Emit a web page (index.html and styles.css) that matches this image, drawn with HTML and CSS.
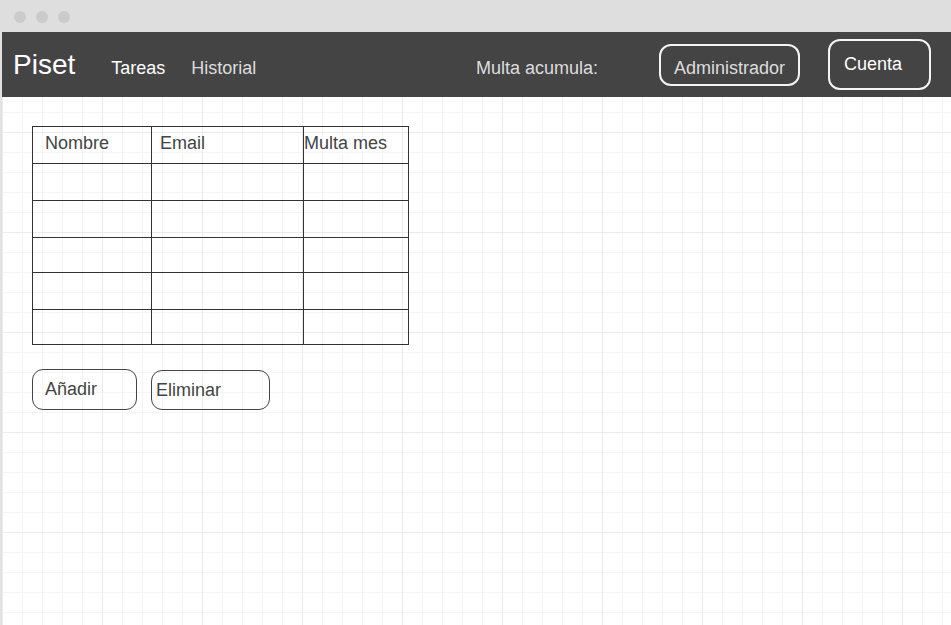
FILE: index.html
```html
<!DOCTYPE html>
<html lang="es">
<head>
<meta charset="utf-8">
<title>Piset</title>
<link rel="stylesheet" href="styles.css">
</head>
<body>
<div class="window">
  <div class="titlebar">
    <span class="dot"></span><span class="dot"></span><span class="dot"></span>
  </div>
  <div class="canvas">
    <header class="navbar">
      <span class="brand">Piset</span>
      <a class="nav-link nav-tareas">Tareas</a>
      <a class="nav-link nav-historial">Historial</a>
      <span class="multa">Multa acumula:</span>
      <button class="nav-btn btn-admin">Administrador</button>
      <button class="nav-btn btn-cuenta">Cuenta</button>
    </header>
    <main class="content">
      <table class="users">
        <colgroup>
          <col class="col-name"><col class="col-email"><col class="col-multa">
        </colgroup>
        <thead>
          <tr class="row-head">
            <th class="th-name">Nombre</th>
            <th class="th-email">Email</th>
            <th class="th-multa">Multa mes</th>
          </tr>
        </thead>
        <tbody>
          <tr class="row-tall"><td></td><td></td><td></td></tr>
          <tr class="row-tall"><td></td><td></td><td></td></tr>
          <tr class="row-short"><td></td><td></td><td></td></tr>
          <tr class="row-tall"><td></td><td></td><td></td></tr>
          <tr class="row-short"><td></td><td></td><td></td></tr>
        </tbody>
      </table>
      <div class="actions">
        <button class="act-btn btn-add">Añadir</button>
        <button class="act-btn btn-del">Eliminar</button>
      </div>
    </main>
  </div>
</div>
</body>
</html>
```
FILE: styles.css
```css
* { box-sizing: border-box; }
html, body { margin: 0; padding: 0; }
body {
  width: 951px;
  height: 625px;
  overflow: hidden;
  font-family: "Liberation Sans", Arial, sans-serif;
  background: #ffffff;
}
.window {
  display: flex;
  flex-direction: column;
  height: 625px;
}
.titlebar {
  height: 32px;
  flex: none;
  background: #dedede;
  display: flex;
  align-items: center;
  gap: 10px;
  padding-left: 14px;
  padding-top: 1px;
}
.dot {
  width: 12px;
  height: 12px;
  border-radius: 50%;
  background: #cbcbcb;
}
.canvas {
  flex: 1;
  border-left: 2px solid #e2e2e2;
  background-color: #ffffff;
  background-image:
    linear-gradient(to right, #ebebeb 1px, transparent 1px),
    linear-gradient(to bottom, #ebebeb 1px, transparent 1px),
    linear-gradient(to right, #f4f4f4 1px, transparent 1px),
    linear-gradient(to bottom, #f4f4f4 1px, transparent 1px);
  background-size: 100px 100px, 100px 100px, 20px 20px, 20px 20px;
  background-position: 0 0;
}
.navbar {
  height: 65px;
  background: #444444;
  display: flex;
  align-items: flex-start;
  padding-right: 20px;
}
.brand {
  margin-left: 11px;
  margin-top: 17px;
  font-size: 28px;
  line-height: 32px;
  color: #ffffff;
}
.nav-link {
  margin-top: 26px;
  font-size: 18px;
  line-height: 20px;
  color: #dddddd;
}
.nav-tareas { margin-left: 36px; color: #ffffff; }
.nav-historial { margin-left: 26px; }
.multa {
  margin-left: auto;
  margin-top: 26px;
  font-size: 18px;
  line-height: 20px;
  color: #dddddd;
}
.nav-btn {
  font-family: inherit;
  font-size: 18px;
  line-height: 20px;
  background: transparent;
  border: 2px solid #f4f4f4;
  border-radius: 12px;
  text-align: left;
  margin: 0;
}
.btn-admin {
  margin-left: 61px;
  margin-top: 12px;
  width: 141px;
  height: 42px;
  padding: 12px 0 6px 13px;
  color: #dddddd;
}
.btn-cuenta {
  margin-left: 28px;
  margin-top: 7px;
  width: 103px;
  height: 51px;
  padding: 13px 0 14px 14px;
  color: #ffffff;
}
.content {
  padding: 29px 0 0 30px;
  color: #444444;
}
.users {
  border-collapse: collapse;
  table-layout: fixed;
  width: 376px;
}
.col-name { width: 119px; }
.col-email { width: 152px; }
.col-multa { width: 105px; }
.users th, .users td {
  border: 1px solid #333333;
  padding: 0;
  font-weight: normal;
  text-align: left;
  vertical-align: top;
  font-size: 18px;
  line-height: 20px;
  color: #444444;
}
.users th { padding-top: 6px; }
.users .th-name { padding-left: 12px; }
.users .th-email { padding-left: 8px; }
.users .th-multa { padding-left: 0; }
.row-head { height: 37px; }
.row-tall { height: 37px; }
.row-short { height: 35px; }
.actions {
  display: flex;
  align-items: flex-start;
  gap: 14px;
  margin-top: 24px;
}
.act-btn {
  font-family: inherit;
  font-size: 18px;
  line-height: 20px;
  color: #444444;
  background: transparent;
  border: 1px solid #444444;
  border-radius: 11px;
  text-align: left;
  margin: 0;
}
.btn-add {
  width: 105px;
  height: 41px;
  padding: 9px 0 10px 12px;
}
.btn-del {
  margin-top: 1px;
  width: 119px;
  height: 40px;
  padding: 9px 0 9px 4px;
}
```
